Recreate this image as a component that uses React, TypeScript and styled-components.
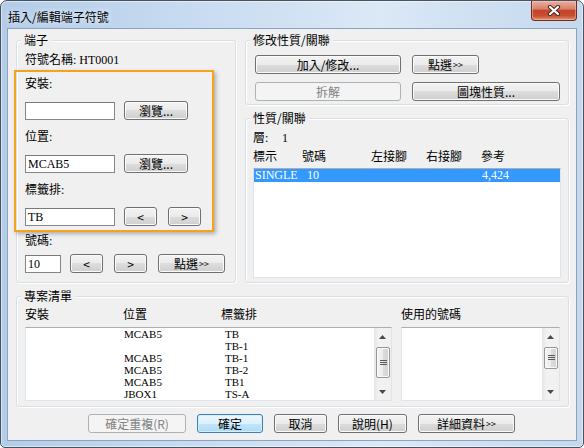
import React from "react";
import styled, { createGlobalStyle } from "styled-components";

const GlobalStyle = createGlobalStyle`
  html, body { margin: 0; padding: 0; background: #ffffff; }
  body {
    font-family: "Liberation Serif", "Noto Sans CJK TC", serif;
    font-size: 12px;
    color: #000;
  }
  * { box-sizing: border-box; }
`;

const Window = styled.div`
  width: 584px;
  height: 448px;
  display: flex;
  flex-direction: column;
  padding: 0 6px 6px;
  border: 1px solid #48525e;
  border-radius: 7px 7px 5px 5px;
  background: linear-gradient(to right, #b3cce8 0%, #c6daf0 30%, #dbe8f6 65%, #c4d8ee 100%);
  box-shadow: inset 0 0 0 1px rgba(255, 255, 255, 0.5);
  overflow: hidden;
`;

const TitleBar = styled.div`
  height: 27px;
  flex: none;
  display: flex;
  justify-content: space-between;
  align-items: flex-start;
`;

const Title = styled.div`
  padding: 8px 0 0 1px;
  font-family: "Noto Sans CJK TC", sans-serif;
  font-size: 12px;
  line-height: 15px;
  text-shadow: 0 0 6px rgba(255, 255, 255, 0.9);
`;

const CloseButton = styled.div`
  width: 46px;
  height: 20px;
  display: flex;
  align-items: center;
  justify-content: center;
  border: 1px solid #6e2a1f;
  border-top: none;
  border-radius: 0 0 4px 4px;
  background: linear-gradient(#eab0a2 0%, #d98068 42%, #c2442c 50%, #c94e31 78%, #e3946c 100%);
  box-shadow: inset 0 0 0 1px rgba(255, 210, 190, 0.45);
`;

const Client = styled.div`
  flex: 1;
  display: flex;
  flex-direction: column;
  background: #f0f0f0;
  border: 1px solid #8da2bb;
  padding: 11px 7px 6px 8px;
`;

const TopRow = styled.div`
  display: flex;
  gap: 9px;
  height: 243px;
  flex: none;
`;

const Column = styled.div`
  width: 324px;
  display: flex;
  flex-direction: column;
  gap: 13px;
`;

const GroupBox = styled.div<{ $w?: number; $h?: number; $mt?: number }>`
  display: flex;
  flex-direction: column;
  border: 1px solid #d5dfe5;
  border-radius: 3px;
  box-shadow: inset 1px 1px 0 #ffffff, 1px 1px 0 #ffffff;
  margin-top: ${(p) => p.$mt ?? 0}px;
  ${(p) => (p.$w ? `width: ${p.$w}px;` : "")}
  ${(p) => (p.$h ? `height: ${p.$h}px; flex: none;` : "flex: 1;")}
`;

const Legend = styled.div`
  align-self: flex-start;
  margin: -9px 0 0 4px;
  padding: 0 3px;
  line-height: 16px;
  background: #f0f0f0;
  font-family: "Noto Sans CJK TC", sans-serif;
`;

const GroupBody = styled.div<{ $pl: number; $pr?: number; $pb?: number }>`
  flex: 1;
  display: flex;
  flex-direction: column;
  padding: 0 ${(p) => p.$pr ?? p.$pl}px ${(p) => p.$pb ?? 0}px ${(p) => p.$pl}px;
  min-height: 0;
`;

const TextLine = styled.div<{ $mt?: number }>`
  line-height: 14px;
  height: 14px;
  margin-top: ${(p) => p.$mt ?? 0}px;
  white-space: nowrap;
`;

const Highlight = styled.div`
  width: 200px;
  margin: 3px 0 0 -11px;
  padding: 5px 0 4px 9px;
  border: 2px solid #f5a31f;
  box-shadow: 2px 2px 4px rgba(0, 0, 0, 0.28);
  display: flex;
  flex-direction: column;
  gap: 10px;
`;

const FieldRow = styled.div<{ $mt?: number }>`
  display: flex;
  align-items: center;
  height: 19px;
  margin-top: ${(p) => p.$mt ?? 0}px;
`;

const TextInput = styled.div<{ $w: number; $mr: number }>`
  width: ${(p) => p.$w}px;
  height: 18px;
  margin-right: ${(p) => p.$mr}px;
  margin-top: 1px;
  padding: 0 2px;
  line-height: 16px;
  background: #ffffff;
  border: 1px solid #868686;
  border-top-color: #7a7a7a;
  white-space: nowrap;
`;

const Button = styled.div<{ $w: number; $mr?: number; $disabled?: boolean; $default?: boolean }>`
  width: ${(p) => p.$w}px;
  height: 19px;
  margin-right: ${(p) => p.$mr ?? 0}px;
  flex: none;
  display: flex;
  align-items: center;
  justify-content: center;
  border-radius: 3px;
  line-height: 15px;
  white-space: nowrap;
  font-family: "Noto Sans CJK TC", sans-serif;
  border: 1px solid ${(p) => (p.$disabled ? "#adb2b5" : p.$default ? "#3c7fb1" : "#707070")};
  color: ${(p) => (p.$disabled ? "#838383" : "#000")};
  background: ${(p) =>
    p.$disabled
      ? "#f4f4f4"
      : p.$default
      ? "linear-gradient(#ecf7fd 0%, #dcf1fc 50%, #c3e7fb 50%, #a9dbf6 100%)"
      : "linear-gradient(#f3f3f3 0%, #ebebeb 50%, #dddddd 50%, #cfcfcf 100%)"};
  box-shadow: inset 0 0 0 1px ${(p) => (p.$disabled ? "#f4f4f4" : p.$default ? "#d6eefb" : "#fbfbfb")};
`;

const Small = styled.span`
  font-size: 9px;
  margin-left: 1px;
`;

const ButtonGrid = styled.div`
  display: grid;
  grid-template-columns: 146px 148px;
  grid-template-rows: 19px 19px;
  column-gap: 11px;
  row-gap: 8px;
  margin-top: 7px;
`;

const LayerLine = styled.div`
  display: flex;
  line-height: 14px;
  margin-top: 5px;
`;

const LayerLabel = styled.span`
  width: 29px;
`;

const HeaderGrid = styled.div<{ $cols: string; $mt: number }>`
  display: grid;
  grid-template-columns: ${(p) => p.$cols};
  line-height: 14px;
  margin-top: ${(p) => p.$mt}px;
  white-space: nowrap;
`;

const ListBox = styled.div<{ $mt?: number }>`
  flex: 1;
  display: flex;
  margin-top: ${(p) => p.$mt ?? 0}px;
  background: #ffffff;
  border: 1px solid #e2e3ea;
  border-top-color: #abadb3;
  overflow: hidden;
  min-height: 0;
`;

const ListContent = styled.div`
  flex: 1;
  display: flex;
  flex-direction: column;
  overflow: hidden;
`;

const ListRow = styled.div<{ $cols: string; $selected?: boolean; $h: number }>`
  display: grid;
  grid-template-columns: ${(p) => p.$cols};
  height: ${(p) => p.$h}px;
  line-height: ${(p) => p.$h}px;
  font-size: ${(p) => (p.$h < 13 ? 11 : 12)}px;
  flex: none;
  padding-left: 1px;
  white-space: nowrap;
  background: ${(p) => (p.$selected ? "#3399ff" : "transparent")};
  color: ${(p) => (p.$selected ? "#fff" : "#000")};
`;

const ScrollBar = styled.div`
  width: 17px;
  flex: none;
  display: flex;
  flex-direction: column;
  background: linear-gradient(to right, #e6e6e6, #f2f2f2 30%, #f0f0f0);
`;

const ScrollArrow = styled.div`
  height: 17px;
  flex: none;
  display: flex;
  align-items: center;
  justify-content: center;
`;

const ScrollTrack = styled.div<{ $offset: number }>`
  flex: 1;
  padding-top: ${(p) => p.$offset}px;
`;

const Thumb = styled.div<{ $h: number }>`
  height: ${(p) => p.$h}px;
  margin: 0 1px 0 2px;
  border: 1px solid #979797;
  border-radius: 2px;
  background: linear-gradient(to right, #f4f4f4, #ececec 50%, #dcdcdc 50%, #d2d2d2);
  box-shadow: inset 0 0 0 1px #fafafa;
  display: flex;
  align-items: center;
  justify-content: center;
`;

const ProjectGrid = styled.div`
  flex: 1;
  display: grid;
  grid-template-columns: 367px 159px;
  grid-template-rows: 14px 1fr;
  column-gap: 9px;
  row-gap: 5px;
  margin-top: 4px;
  min-height: 0;
`;

const HeaderCell = styled.div`
  line-height: 14px;
  white-space: nowrap;
`;

const ButtonBar = styled.div`
  display: flex;
  gap: 11px;
  padding-left: 72px;
  margin-top: 7px;
  flex: none;
`;

const CloseIcon = () => (
  <svg width="14" height="11" viewBox="0 0 14 11">
    <path d="M3 2 L11 9 M11 2 L3 9" stroke="#4a2a22" strokeWidth="4.2" strokeLinecap="round" fill="none" />
    <path d="M3 2 L11 9 M11 2 L3 9" stroke="#ffffff" strokeWidth="2.2" strokeLinecap="round" fill="none" />
  </svg>
);

const ArrowIcon = ({ up }: { up?: boolean }) => (
  <svg width="7" height="4" viewBox="0 0 7 4">
    <path d={up ? "M0 4 L3.5 0 L7 4 Z" : "M0 0 L7 0 L3.5 4 Z"} fill="#4a4a4a" />
  </svg>
);

const Grip = () => (
  <svg width="7" height="6" viewBox="0 0 7 6">
    <path d="M0 0.5 H7 M0 2.5 H7 M0 4.5 H7" stroke="#5a5a5a" strokeWidth="1" />
  </svg>
);

const Scroller = ({ offset, thumb }: { offset: number; thumb: number }) => (
  <ScrollBar>
    <ScrollArrow>
      <ArrowIcon up />
    </ScrollArrow>
    <ScrollTrack $offset={offset}>
      <Thumb $h={thumb}>
        <Grip />
      </Thumb>
    </ScrollTrack>
    <ScrollArrow>
      <ArrowIcon />
    </ScrollArrow>
  </ScrollBar>
);

const projectRows = [
  ["", "MCAB5", "TB"],
  ["", "", "TB-1"],
  ["", "MCAB5", "TB-1"],
  ["", "MCAB5", "TB-2"],
  ["", "MCAB5", "TB1"],
  ["", "JBOX1", "TS-A"],
];

export default function App() {
  return (
    <>
      <GlobalStyle />
      <Window>
        <TitleBar>
          <Title>插入/編輯端子符號</Title>
          <CloseButton>
            <CloseIcon />
          </CloseButton>
        </TitleBar>
        <Client>
          <TopRow>
            <GroupBox $w={220}>
              <Legend>端子</Legend>
              <GroupBody $pl={8}>
                <TextLine $mt={5}>符號名稱: HT0001</TextLine>
                <Highlight>
                  <TextLine>安裝:</TextLine>
                  <FieldRow>
                    <TextInput $w={90} $mr={9} />
                    <Button $w={64}>瀏覽...</Button>
                  </FieldRow>
                  <TextLine>位置:</TextLine>
                  <FieldRow>
                    <TextInput $w={90} $mr={9}>MCAB5</TextInput>
                    <Button $w={64}>瀏覽...</Button>
                  </FieldRow>
                  <TextLine>標籤排:</TextLine>
                  <FieldRow>
                    <TextInput $w={90} $mr={9}>TB</TextInput>
                    <Button $w={33} $mr={11}>&lt;</Button>
                    <Button $w={33}>&gt;</Button>
                  </FieldRow>
                </Highlight>
                <TextLine $mt={2}>號碼:</TextLine>
                <FieldRow $mt={6}>
                  <TextInput $w={36} $mr={9}>10</TextInput>
                  <Button $w={33} $mr={11}>&lt;</Button>
                  <Button $w={33} $mr={11}>&gt;</Button>
                  <Button $w={67}>
                    點選<Small>&gt;&gt;</Small>
                  </Button>
                </FieldRow>
              </GroupBody>
            </GroupBox>
            <Column>
              <GroupBox $h={65}>
                <Legend>修改性質/關聯</Legend>
                <GroupBody $pl={9}>
                  <ButtonGrid>
                    <Button $w={146}>加入/修改...</Button>
                    <Button $w={67}>
                      點選<Small>&gt;&gt;</Small>
                    </Button>
                    <Button $w={146} $disabled>
                      拆解
                    </Button>
                    <Button $w={148}>圖塊性質...</Button>
                  </ButtonGrid>
                </GroupBody>
              </GroupBox>
              <GroupBox>
                <Legend>性質/關聯</Legend>
                <GroupBody $pl={7} $pb={4}>
                  <LayerLine>
                    <LayerLabel>層:</LayerLabel>
                    <span>1</span>
                  </LayerLine>
                  <HeaderGrid $cols="49px 69px 55px 55px auto" $mt={5}>
                    <span>標示</span>
                    <span>號碼</span>
                    <span>左接腳</span>
                    <span>右接腳</span>
                    <span>參考</span>
                  </HeaderGrid>
                  <ListBox $mt={4}>
                    <ListContent>
                      <ListRow $cols="52px 175px auto" $selected $h={13}>
                        <span>SINGLE</span>
                        <span>10</span>
                        <span>4,424</span>
                      </ListRow>
                    </ListContent>
                  </ListBox>
                </GroupBody>
              </GroupBox>
            </Column>
          </TopRow>
          <GroupBox $h={111} $mt={13}>
            <Legend>專案清單</Legend>
            <GroupBody $pl={8} $pb={5}>
              <ProjectGrid>
                <HeaderGrid $cols="98px 98px auto" $mt={0}>
                  <span>安裝</span>
                  <span>位置</span>
                  <span>標籤排</span>
                </HeaderGrid>
                <HeaderCell>使用的號碼</HeaderCell>
                <ListBox>
                  <ListContent>
                    {projectRows.map((r, i) => (
                      <ListRow key={i} $cols="97px 101px auto" $h={12}>
                        <span>{r[0]}</span>
                        <span>{r[1]}</span>
                        <span>{r[2]}</span>
                      </ListRow>
                    ))}
                  </ListContent>
                  <Scroller offset={2} thumb={31} />
                </ListBox>
                <ListBox>
                  <ListContent />
                  <Scroller offset={2} thumb={22} />
                </ListBox>
              </ProjectGrid>
            </GroupBody>
          </GroupBox>
          <ButtonBar>
            <Button $w={98} $disabled>
              確定重複(R)
            </Button>
            <Button $w={66} $default>
              確定
            </Button>
            <Button $w={53}>取消</Button>
            <Button $w={69}>說明(H)</Button>
            <Button $w={97}>
              詳細資料<Small>&gt;&gt;</Small>
            </Button>
          </ButtonBar>
        </Client>
      </Window>
    </>
  );
}
